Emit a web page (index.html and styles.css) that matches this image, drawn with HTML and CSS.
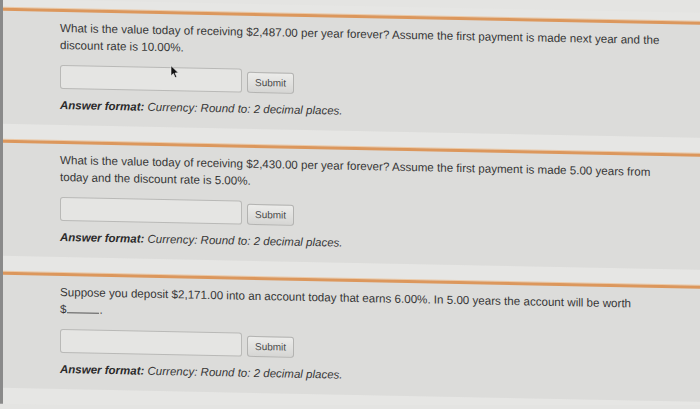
FILE: index.html
```html
<!DOCTYPE html>
<html lang="en">
<head>
<meta charset="utf-8">
<title>Questions</title>
<link rel="stylesheet" href="styles.css">
</head>
<body>
<div class="page">
  <div class="band band-top"></div>

  <section class="question">
    <p class="prompt">What is the value today of receiving $2,487.00 per year forever? Assume the first payment is made next year and the discount rate is 10.00%.</p>
    <div class="answer-row">
      <div class="field"></div>
      <button class="submit" type="button">Submit</button>
      <svg class="cursor" width="9" height="13" viewBox="0 0 9 13"><path d="M1 0.5 L1 10.5 L3.4 8.3 L5.2 12.3 L6.8 11.6 L5 7.7 L8.3 7.5 Z" fill="#111" stroke="#eee" stroke-width="0.6"/></svg>
    </div>
    <p class="format"><b>Answer format:</b> Currency: Round to: 2 decimal places.</p>
  </section>
  <div class="band"></div>

  <section class="question">
    <p class="prompt">What is the value today of receiving $2,430.00 per year forever? Assume the first payment is made 5.00 years from today and the discount rate is 5.00%.</p>
    <div class="answer-row">
      <div class="field"></div>
      <button class="submit" type="button">Submit</button>
    </div>
    <p class="format"><b>Answer format:</b> Currency: Round to: 2 decimal places.</p>
  </section>
  <div class="band"></div>

  <section class="question">
    <p class="prompt">Suppose you deposit $2,171.00 into an account today that earns 6.00%. In 5.00 years the account will be worth <span class="nowrap">$<span class="blank"></span>.</span></p>
    <div class="answer-row">
      <div class="field"></div>
      <button class="submit" type="button">Submit</button>
    </div>
    <p class="format"><b>Answer format:</b> Currency: Round to: 2 decimal places.</p>
  </section>
  <div class="band"></div>
</div>
</body>
</html>
```

FILE: styles.css
```css
html {
  background: #e4e4e2;
}

body {
  margin: 0;
  font-family: "Liberation Sans", Arial, sans-serif;
  color: #363636;
  overflow: hidden;
}

.page {
  border-left: 3px solid #8a8a8a;
  transform: skewY(1.15deg);
  transform-origin: 60px 0;
}

.band {
  height: 16px;
  background: #e6e6e4;
}

.band-top {
  height: 9px;
}

.question {
  position: relative;
  background: #dcdcda;
  border-top: 3px solid #dc975c;
  box-shadow: 0 -1px 0 #ecc9a6;
  padding: 7px 30px 12px 57px;
}

.prompt {
  margin: 0;
  max-width: 606px;
  font-size: 11.6px;
  line-height: 17px;
}

.nowrap {
  white-space: nowrap;
}

.blank {
  display: inline-block;
  width: 32px;
  height: 11px;
  border-bottom: 1px solid #555;
  vertical-align: baseline;
  margin-left: 1px;
}

.answer-row {
  position: relative;
  display: flex;
  align-items: flex-end;
  gap: 5px;
  margin-top: 12px;
}

.field {
  width: 180px;
  height: 22px;
  background: #e5e5e3;
  border: 1px solid #b9b9b7;
  border-radius: 3px;
}

.submit {
  height: 21px;
  padding: 0 7px;
  font-family: "Liberation Sans", Arial, sans-serif;
  font-size: 10px;
  color: #4a4a4a;
  background: linear-gradient(#ececea, #d6d6d4);
  border: 1px solid #b3b3b1;
  border-radius: 3px;
}

.cursor {
  position: absolute;
  left: 110px;
  top: -2px;
}

.format {
  margin: 8px 0 0;
  font-size: 11.5px;
  line-height: 16px;
  font-style: italic;
  color: #363636;
}

.format b {
  font-weight: bold;
  color: #2a2a2a;
}
```
